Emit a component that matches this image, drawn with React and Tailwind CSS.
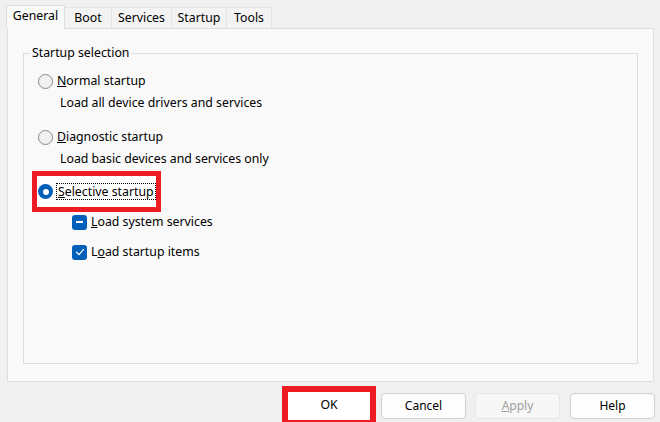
import React from 'react'

const font = { fontFamily: '"Noto Sans", "Liberation Sans", sans-serif' }

function Radio({ checked }) {
  if (checked) {
    return (
      <span className="flex h-[15px] w-[15px] shrink-0 items-center justify-center rounded-full bg-[#005fb8]">
        <span className="h-[6px] w-[6px] rounded-full bg-white" />
      </span>
    )
  }
  return <span className="h-[15px] w-[15px] shrink-0 rounded-full border border-[#8a8a8a] bg-[#f0f0f0]" />
}

function Check({ mixed }) {
  return (
    <span className="flex h-[15px] w-[15px] shrink-0 items-center justify-center rounded-[3px] bg-[#005fb8]">
      {mixed ? (
        <span className="h-[1.5px] w-[7px] bg-white" />
      ) : (
        <svg width="10" height="10" viewBox="0 0 10 10" fill="none">
          <path d="M1.5 5.2 L4 7.6 L8.6 2.4" stroke="white" strokeWidth="1.2" strokeLinecap="round" strokeLinejoin="round" />
        </svg>
      )}
    </span>
  )
}

function Btn({ children, disabled, className = '' }) {
  return (
    <button
      className={
        'h-[26px] w-[85px] rounded-[4px] border text-[12px] ' +
        (disabled
          ? 'border-[#e6e6e6] bg-[#f7f7f7] text-[#a0a0a0] '
          : 'border-[#d0d0d0] bg-[#fdfdfd] text-black ') +
        className
      }
    >
      {children}
    </button>
  )
}

// msconfig 的 General 页
export default function App() {
  const tabs = ['Boot', 'Services', 'Startup', 'Tools']
  const widths = ['w-[47px]', 'w-[60px]', 'w-[55px]', 'w-[45px]']

  return (
    <div className="flex h-[422px] w-[660px] flex-col overflow-hidden bg-[#f0f0f0] text-[12.3px] text-black" style={font}>
      {/* 标签 */}
      <div className="flex h-[28px] shrink-0 items-end pl-[6px]">
        <div className="relative z-10 -mb-px flex h-[24px] w-[59px] items-start justify-center border border-b-0 border-[#dedede] bg-[#f9f9f9] pt-[1px]">
          General
        </div>
        {tabs.map((t, i) => (
          <div
            key={t}
            className={'flex h-[21px] items-center justify-center border border-l-0 border-b-0 border-[#e3e3e3] bg-[#f3f3f3] ' + widths[i]}
          >
            {t}
          </div>
        ))}
      </div>

      {/* 面板 */}
      <div className="ml-[7px] flex h-[354px] w-[647px] shrink-0 flex-col border border-[#dedede] bg-[#f9f9f9]">
        <fieldset className="mx-[15px] mb-[17px] mt-[16px] flex-1 border border-[#dcdcdc]">
          <legend className="ml-[6px] px-[2px] leading-[16px]">Startup selection</legend>
          <div className="flex flex-col pl-[14px] pt-[10px]">
            <div className="flex h-[20px] items-center gap-[4px]">
              <Radio />
              <span><u>N</u>ormal startup</span>
            </div>
            <div className="ml-[22px] mt-[2px] flex h-[20px] items-center">Load all device drivers and services</div>

            <div className="mt-[14px] flex h-[20px] items-center gap-[4px]">
              <Radio />
              <span><u>D</u>iagnostic startup</span>
            </div>
            <div className="ml-[22px] mt-[2px] flex h-[20px] items-center">Load basic devices and services only</div>

            <div className="-ml-[6px] mt-[2px] flex h-[41px] w-[129px] items-center gap-[3px] border-[5px] border-[#ed1c24] bg-white pl-[1px]">
              <Radio checked />
              <span className="border border-dotted border-black px-[1px] leading-[15px]">
                <u>S</u>elective startup
              </span>
            </div>

            <div className="ml-[34px] flex h-[20px] items-center gap-[4px]">
              <Check mixed />
              <span><u>L</u>oad system services</span>
            </div>
            <div className="ml-[34px] mt-[10px] flex h-[20px] items-center gap-[4px]">
              <Check />
              <span>L<u>o</u>ad startup items</span>
            </div>
          </div>
        </fieldset>
      </div>

      {/* 按钮 */}
      <div className="flex min-h-0 flex-1 items-start justify-end pr-[5px] pt-[11px]">
        <div className="-mt-[7px] flex h-[40px] w-[94px] shrink-0 items-center justify-center border-[6px] border-[#ed1c24] bg-white">
          <span className="-mt-[2px]">OK</span>
        </div>
        <Btn className="ml-[5px]">Cancel</Btn>
        <Btn disabled className="ml-[9px]"><u>A</u>pply</Btn>
        <Btn className="ml-[10px]">Help</Btn>
      </div>
    </div>
  )
}
